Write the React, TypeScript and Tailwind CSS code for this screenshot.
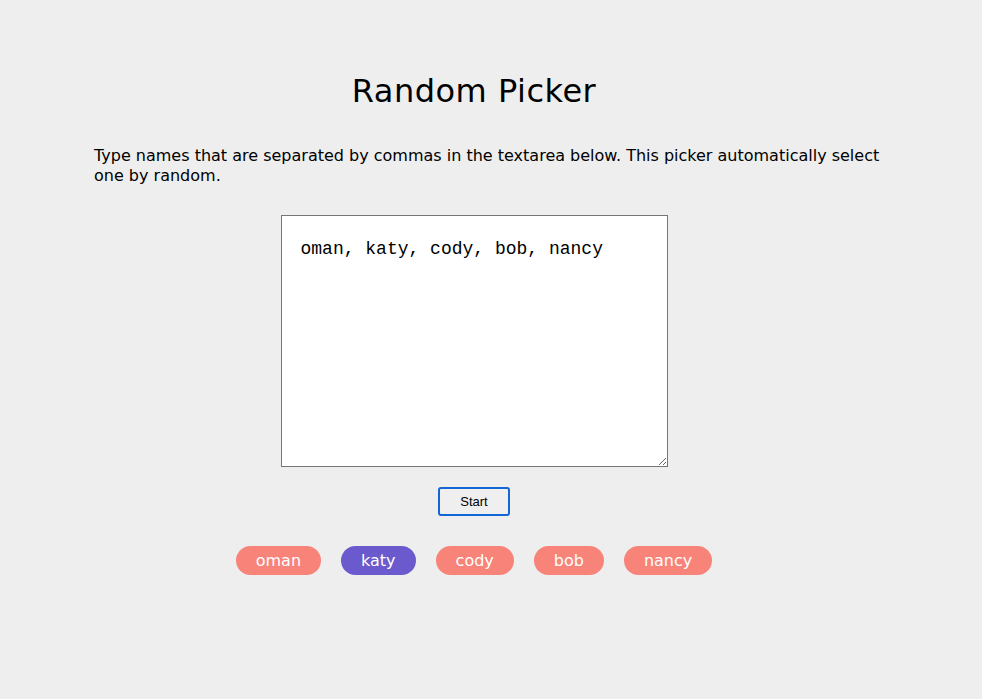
import React from 'react';

const names = ['oman', 'katy', 'cody', 'bob', 'nancy'];
const picked = 'katy';

export default function App() {
  return (
    <div className="min-h-[699px] bg-[#eeeeee] font-['DejaVu_Sans',sans-serif] text-black">
      <div className="ml-[74px] w-[800px] pt-[71px] flex flex-col items-center">
        <h1 className="text-[32px] leading-[40px] tracking-[0.5px]">Random Picker</h1>
        <p className="mt-[35px] self-stretch pl-[20px] -mr-[20px] text-[16px] leading-[20px]">
          Type names that are separated by commas in the textarea below. This picker automatically select one by random.
        </p>
        <textarea
          className="mt-[29px] w-[387px] h-[252px] bg-white border border-[#767676] pt-[22px] px-[19px] font-['Liberation_Mono',monospace] text-[18px] leading-[22px] resize-y outline-none"
          defaultValue="oman, katy, cody, bob, nancy"
        />
        <button className="mt-[20px] w-[72px] h-[29px] bg-[#efefef] border-2 border-[#1366d6] rounded-[3px] font-['Liberation_Sans',sans-serif] text-[13px]">
          Start
        </button>
        <div className="mt-[30px] flex gap-[20px]">
          {names.map((name) => (
            <span
              key={name}
              className={`h-[29px] px-[20px] rounded-full flex items-center text-white text-[16px] ${
                name === picked ? 'bg-[#6a5acd]' : 'bg-[#f88379]'
              }`}
            >
              {name}
            </span>
          ))}
        </div>
      </div>
    </div>
  );
}
